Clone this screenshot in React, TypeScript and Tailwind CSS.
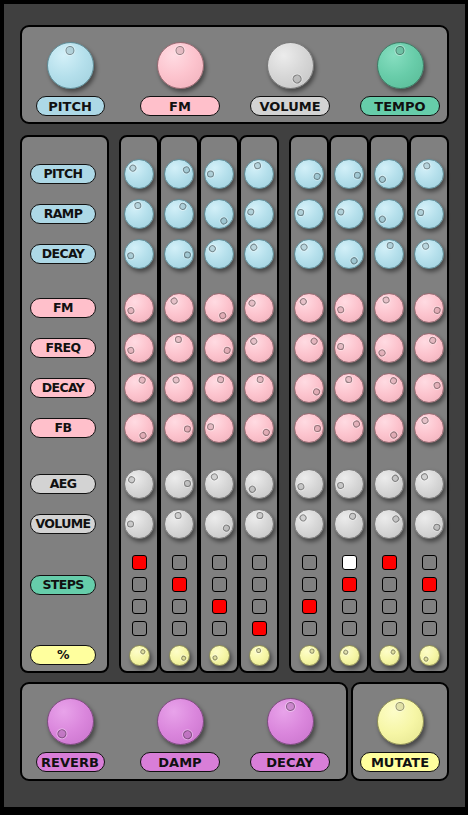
import React from "react";

type Tone = "blue" | "pink" | "gray" | "green" | "purple" | "yellow";
type Size = "lg" | "md" | "sm";

const knobFill: Record<Tone, string> = {
  blue: "bg-[radial-gradient(circle_at_35%_28%,#d3f0f8_0%,#b4dfeb_50%,#9fcfdc_100%)] border-[#5f8e99]",
  pink: "bg-[radial-gradient(circle_at_35%_28%,#ffdbe2_0%,#fcc3cd_50%,#eeafba_100%)] border-[#9a6a72]",
  gray: "bg-[radial-gradient(circle_at_35%_28%,#ececec_0%,#d6d6d6_50%,#c2c2c2_100%)] border-[#7a7a7a]",
  green: "bg-[radial-gradient(circle_at_35%_28%,#86dec0_0%,#68cca9_50%,#58b995_100%)] border-[#3d7d66]",
  purple: "bg-[radial-gradient(circle_at_35%_28%,#e8a3ea_0%,#da86dc_50%,#c872cb_100%)] border-[#7e4a80]",
  yellow: "bg-[radial-gradient(circle_at_35%_28%,#fdfdc8_0%,#f6f6a6_50%,#e4e48e_100%)] border-[#8f8f55]",
};

const labelFill: Record<Tone, string> = {
  blue: "bg-[#add8e6]",
  pink: "bg-[#ffc0cb]",
  gray: "bg-[#d3d3d3]",
  green: "bg-[#66cdaa]",
  purple: "bg-[#d87ed8]",
  yellow: "bg-[#ffff9e]",
};

const knobSize: Record<Size, { box: string; dot: string }> = {
  lg: { box: "w-[47px] h-[47px]", dot: "w-[9px] h-[9px] top-[3px]" },
  md: { box: "w-[30px] h-[30px]", dot: "w-[7px] h-[7px] top-[2px]" },
  sm: { box: "w-[21px] h-[21px]", dot: "w-[5px] h-[5px] top-[2px]" },
};

const Knob = ({ tone, size, angle }: { tone: Tone; size: Size; angle: number }) => (
  <div
    className={`relative rounded-full border shadow-[2px_3px_4px_rgba(0,0,0,0.45)] ${knobFill[tone]} ${knobSize[size].box}`}
  >
    <div className="absolute inset-0" style={{ transform: `rotate(${angle}deg)` }}>
      <div
        className={`absolute left-1/2 -translate-x-1/2 rounded-full border border-black/35 bg-black/10 shadow-[0_0_0_1px_rgba(255,255,255,0.35)] ${knobSize[size].dot}`}
      />
    </div>
  </div>
);

const Label = ({ tone, text, w, small }: { tone: Tone; text: string; w: string; small?: boolean }) => (
  <div
    className={`h-[20px] ${w} rounded-full border border-[#111] flex items-center justify-center font-bold text-[#111] leading-none ${
      small ? "text-[12.5px] tracking-[-0.6px]" : "text-[13px]"
    } ${labelFill[tone]}`}
    style={{ fontFamily: '"DejaVu Sans", Verdana, sans-serif' }}
  >
    {text}
  </div>
);

const BigControl = ({ tone, text, angle, narrow }: { tone: Tone; text: string; angle: number; narrow?: boolean }) => (
  <div className="w-[80px] flex flex-col items-center gap-[7px]">
    <Knob tone={tone} size="lg" angle={angle} />
    <Label tone={tone} text={text} w={narrow ? "w-[69px]" : "w-[80px]"} />
  </div>
);

// dot angles per row, one entry per channel
const blueRows = [
  [-46, 61, -90, -10, 106, 99, -129, -15],
  [-8, 27, 145, -76, -80, -76, -128, -80],
  [-102, 96, -51, -38, -36, 143, 8, -23],
];
const pinkRows = [
  [-108, -35, 154, -55, -42, -102, -20, 106],
  [-106, -4, 106, -38, 37, -80, -125, 26],
  [22, -20, 11, 8, 117, -2, 32, 72],
  [152, 97, -82, 121, 94, 62, 146, -28],
];
const grayRows = [
  [-60, 86, -33, -128, -108, -100, 48, -32],
  [-90, -6, 119, 6, -44, 25, 54, 113],
];
const yellowRow = [36, 117, -123, -16, 24, -54, 40, -142];
const activeStep = [0, 1, 2, 3, 2, 1, 0, 1];
const playhead = 5;

const Channel = ({ i }: { i: number }) => (
  <div className="w-[40px] rounded-[8px] border-2 border-black bg-[#808080] flex flex-col items-center pt-[17px]">
    {blueRows.map((row, r) => (
      <div key={r} className="h-[40px] flex items-center justify-center">
        <Knob tone="blue" size="md" angle={row[i]} />
      </div>
    ))}
    <div className="h-[14px]" />
    {pinkRows.map((row, r) => (
      <div key={r} className="h-[40px] flex items-center justify-center">
        <Knob tone="pink" size="md" angle={row[i]} />
      </div>
    ))}
    <div className="h-[16px]" />
    {grayRows.map((row, r) => (
      <div key={r} className="h-[40px] flex items-center justify-center">
        <Knob tone="gray" size="md" angle={row[i]} />
      </div>
    ))}
    <div className="h-[7px]" />
    {[0, 1, 2, 3].map((s) => (
      <div key={s} className="h-[22px] flex items-center justify-center">
        <div
          className={`w-[15px] h-[15px] rounded-[3px] border-[1.5px] border-black ${
            i === playhead && s === 0 ? "bg-white" : activeStep[i] === s ? "bg-[#ff0000]" : "bg-[#808080]"
          }`}
        />
      </div>
    ))}
    <div className="h-[32px] flex items-center justify-center">
      <Knob tone="yellow" size="sm" angle={yellowRow[i]} />
    </div>
  </div>
);

const Row = ({ children }: { children: React.ReactNode }) => (
  <div className="h-[40px] flex items-center pl-[8px]">{children}</div>
);

const LabelPanel = () => (
  <div className="w-[89px] rounded-[8px] border-2 border-black bg-[#808080] flex flex-col pt-[17px]">
    <Row><Label tone="blue" text="PITCH" w="w-[66px]" small /></Row>
    <Row><Label tone="blue" text="RAMP" w="w-[66px]" small /></Row>
    <Row><Label tone="blue" text="DECAY" w="w-[66px]" small /></Row>
    <div className="h-[14px]" />
    <Row><Label tone="pink" text="FM" w="w-[66px]" small /></Row>
    <Row><Label tone="pink" text="FREQ" w="w-[66px]" small /></Row>
    <Row><Label tone="pink" text="DECAY" w="w-[66px]" small /></Row>
    <Row><Label tone="pink" text="FB" w="w-[66px]" small /></Row>
    <div className="h-[16px]" />
    <Row><Label tone="gray" text="AEG" w="w-[66px]" small /></Row>
    <Row><Label tone="gray" text="VOLUME" w="w-[66px]" small /></Row>
    <div className="h-[7px]" />
    <div className="h-[88px] pl-[8px] pt-[24px]">
      <Label tone="green" text="STEPS" w="w-[66px]" small />
    </div>
    <div className="h-[32px] flex items-center pl-[8px]">
      <Label tone="yellow" text="%" w="w-[66px]" small />
    </div>
  </div>
);

export default function App() {
  return (
    <div className="w-[468px] h-[815px] bg-black pt-[4px] pl-[4px]">
      <div className="w-[461px] h-[803px] bg-[#404040] pl-[16px] pt-[21px] flex flex-col">
        {/* master */}
        <div className="w-[429px] h-[99px] rounded-[9px] border-2 border-black bg-[#808080] flex gap-[30px] pl-[8px] pt-[15px]">
          <BigControl tone="blue" text="PITCH" angle={-4} narrow />
          <BigControl tone="pink" text="FM" angle={-4} />
          <BigControl tone="gray" text="VOLUME" angle={152} />
          <BigControl tone="green" text="TEMPO" angle={-4} />
        </div>

        {/* channels */}
        <div className="flex mt-[11px] gap-[10px]">
          <LabelPanel />
          <div className="flex">
            {[0, 1, 2, 3].map((i) => (
              <Channel key={i} i={i} />
            ))}
          </div>
          <div className="flex">
            {[4, 5, 6, 7].map((i) => (
              <Channel key={i} i={i} />
            ))}
          </div>
        </div>

        {/* fx + mutate */}
        <div className="flex mt-[9px] gap-[3px]">
          <div className="w-[328px] h-[99px] rounded-[9px] border-2 border-black bg-[#808080] flex gap-[30px] pl-[8px] pt-[14px]">
            <BigControl tone="purple" text="REVERB" angle={-147} narrow />
            <BigControl tone="purple" text="DAMP" angle={150} />
            <BigControl tone="purple" text="DECAY" angle={-2} />
          </div>
          <div className="w-[98px] h-[99px] rounded-[9px] border-2 border-black bg-[#808080] flex justify-center pt-[14px]">
            <BigControl tone="yellow" text="MUTATE" angle={-4} />
          </div>
        </div>
      </div>
    </div>
  );
}
